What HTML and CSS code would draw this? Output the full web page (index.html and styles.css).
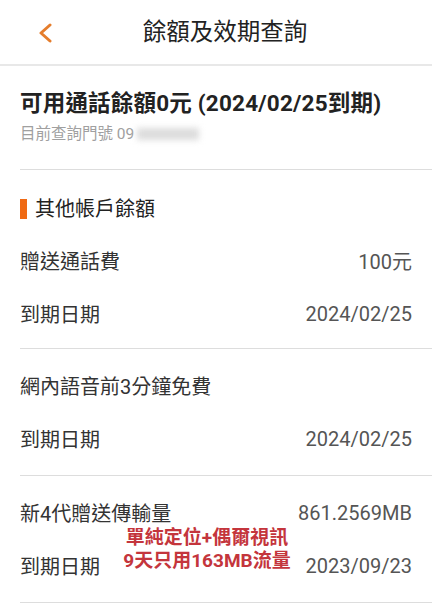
FILE: index.html
```html
<!DOCTYPE html>
<html lang="zh-Hant">
<head>
    <meta charset="UTF-8">
    <meta name="viewport" content="width=device-width, initial-scale=1.0">
    <title>餘額及效期查詢</title>
    <link rel="stylesheet" href="styles.css">
</head>
<body>
    <header class="topbar">
        <a class="back" href="#" aria-label="返回">
            <svg width="16" height="20" viewBox="0 0 16 20">
                <path d="M13 2 L4 10 L13 18" fill="none" stroke="#e57d2c" stroke-width="3" stroke-linecap="round" stroke-linejoin="round"/>
            </svg>
        </a>
        <h1>餘額及效期查詢</h1>
    </header>

    <section class="summary">
        <h2>可用通話餘額0元 (2024/02/25到期)</h2>
        <p class="number">目前查詢門號 09<span class="masked"></span></p>
    </section>

    <section class="accounts">
        <h3 class="section-title">其他帳戶餘額</h3>
        <div class="group">
            <div class="row"><span>贈送通話費</span><span class="value">100元</span></div>
            <div class="row"><span>到期日期</span><span class="value">2024/02/25</span></div>
        </div>
    </section>

    <section class="group bordered">
        <div class="row"><span>網內語音前3分鐘免費</span></div>
        <div class="row"><span>到期日期</span><span class="value">2024/02/25</span></div>
    </section>

    <section class="group bordered last">
        <div class="row"><span>新4代贈送傳輸量</span><span class="value">861.2569MB</span></div>
        <div class="row"><span>到期日期</span><span class="value">2023/09/23</span></div>
        <div class="note">單純定位+偶爾視訊<br>9天只用163MB流量</div>
    </section>
</body>
</html>
```

FILE: styles.css
```css
body {
    margin: 0;
    background: #fff;
    color: #2a2a2a;
    font-family: Roboto, "Noto Sans CJK TC", sans-serif;
    width: 432px;
    overflow: hidden;
}
.topbar {
    height: 64px;
    border-bottom: 2px solid #e8e8e8;
    display: flex;
    align-items: center;
    position: relative;
}
.back {
    position: absolute;
    left: 37px;
    top: 23px;
    display: block;
    width: 16px;
    height: 20px;
}
.topbar h1 {
    flex: 1;
    margin: 0;
    padding-left: 18px;
    text-align: center;
    font-size: 23.5px;
    font-weight: 400;
    line-height: 30px;
    color: #222;
}
.summary {
    margin-left: 20px;
    padding: 22px 0 25px;
    border-bottom: 1px solid #ddd;
}
.summary h2 {
    margin: 0;
    font-size: 22.5px;
    font-weight: 700;
    letter-spacing: 0.2px;
    line-height: 30px;
    color: #222;
}
.number {
    margin: 6px 0 0;
    font-size: 15.5px;
    line-height: 20px;
    color: #a0a0a0;
}
.masked {
    display: inline-block;
    width: 62px;
    height: 12px;
    margin-left: 3px;
    vertical-align: -1px;
    background: #dcdcdc;
    filter: blur(3px);
}
.accounts {
    margin-left: 20px;
    padding-top: 24px;
    border-bottom: 1px solid #ddd;
}
.section-title {
    display: flex;
    align-items: center;
    gap: 8px;
    margin: 0;
    font-size: 20px;
    font-weight: 400;
    line-height: 30px;
    color: #222;
}
.section-title::before {
    content: "";
    width: 7px;
    height: 20px;
    background: #f06a14;
}
.accounts .group {
    padding: 10px 0 8px;
}
.group {
    padding: 10px 0;
}
.bordered {
    margin-left: 20px;
    border-bottom: 1px solid #ddd;
}
.last {
    position: relative;
}
.row {
    display: flex;
    justify-content: space-between;
    align-items: center;
    height: 53px;
    padding-right: 20px;
    font-size: 20px;
    color: #333;
}
.value {
    color: #555;
}
.note {
    position: absolute;
    left: 101px;
    top: 50px;
    width: 172px;
    white-space: nowrap;
    text-align: center;
    font-size: 19px;
    font-weight: 700;
    line-height: 23px;
    color: #c4353c;
}
```
